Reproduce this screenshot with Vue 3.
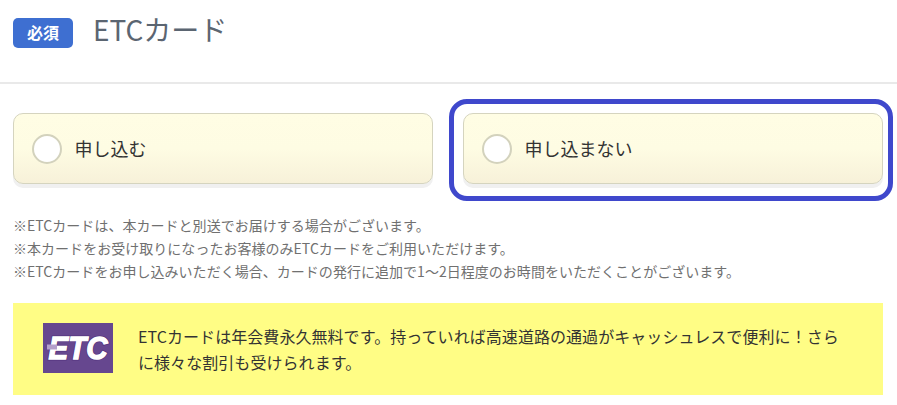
<template>
  <section class="etc">
    <header class="head">
      <span class="badge">必須</span>
      <h2>ETCカード</h2>
    </header>

    <div class="content">
      <div class="options">
        <label
          v-for="option in options"
          :key="option.value"
          class="option"
          :class="{ marked: option.marked }"
        >
          <input type="radio" name="etc" :value="option.value" v-model="selected" />
          <span>{{ option.label }}</span>
        </label>
      </div>

      <ul class="notes">
        <li v-for="note in notes" :key="note">{{ note }}</li>
      </ul>

      <div class="info">
        <svg class="logo" width="70" height="50" viewBox="0 0 70 50">
          <rect width="70" height="50" fill="#66478f" />
          <text class="logoShadow" x="5.500" y="35.800" textLength="59" lengthAdjust="spacingAndGlyphs">ETC</text>
          <text class="logoText" x="5.500" y="35.500" textLength="59" lengthAdjust="spacingAndGlyphs">ETC</text>
          <path d="M4 21.500h10v5H4z" fill="#b49fcb" />
        </svg>
        <p>
          ETCカードは年会費永久無料です。持っていれば高速道路の通過がキャッシュレスで便利に！さらに様々な割引も受けられます。
        </p>
      </div>
    </div>
  </section>
</template>

<script setup>
import { ref } from "vue";

const selected = ref("");

const options = [
  { value: "yes", label: "申し込む" },
  { value: "no", label: "申し込まない", marked: true },
];

const notes = [
  "※ETCカードは、本カードと別送でお届けする場合がございます。",
  "※本カードをお受け取りになったお客様のみETCカードをご利用いただけます。",
  "※ETCカードをお申し込みいただく場合、カードの発行に追加で1～2日程度のお時間をいただくことがございます。",
];
</script>

<style>
body {
  background: #fff;
}
</style>

<style scoped>
.etc {
  height: 405px;
  overflow: hidden;
  font-family: "Noto Sans CJK JP", sans-serif;
  color: #333;
}
.head {
  display: flex;
  align-items: flex-start;
  gap: 20px;
  box-sizing: border-box;
  height: 84px;
  padding: 9px 13px 0;
  border-bottom: 2px solid #e9e9e9;
}
.badge {
  width: 60px;
  height: 30px;
  margin-top: 9px;
  border-radius: 5px;
  background: #3e6fd1;
  color: #fff;
  font-size: 16px;
  font-weight: 700;
  line-height: 28px;
  text-align: center;
}
.head h2 {
  margin: 0;
  color: #5b6571;
  font-size: 28px;
  font-weight: 400;
  line-height: 40px;
}
.content {
  padding: 29px 14px 0 13px;
}
.options {
  display: flex;
  gap: 30px;
}
.option {
  position: relative;
  display: flex;
  flex: 1;
  align-items: center;
  gap: 12.500px;
  box-sizing: border-box;
  height: 71px;
  padding: 0 18px;
  border: 1px solid #d5d4bf;
  border-radius: 10px;
  background: linear-gradient(#fffde4 0%, #fefce3 50%, #f7f1d9 100%);
  box-shadow: 0 4px 0 #f0f0f0;
  font-size: 18px;
  line-height: 26px;
}
.option span {
  padding-bottom: 2px;
}
.option input {
  appearance: none;
  box-sizing: border-box;
  width: 30px;
  height: 30px;
  margin: 0;
  border: 2px solid #d3d2bd;
  border-radius: 50%;
  background: #fff;
}
.option input:checked {
  border: 9px solid #3e6fd1;
}
.marked::after {
  content: "";
  position: absolute;
  top: -15px;
  right: -11px;
  bottom: -18px;
  left: -15px;
  border: 5px solid #3f48cc;
  border-radius: 18px;
  pointer-events: none;
}
.notes {
  margin: 30px 0 0;
  padding: 0;
  list-style: none;
  color: #707070;
  font-size: 14px;
  line-height: 23px;
  letter-spacing: 0.03px;
}
.info {
  display: flex;
  align-items: flex-start;
  gap: 25px;
  box-sizing: border-box;
  height: 92px;
  margin-top: 20px;
  padding: 20px 30px;
  background: #fffd85;
}
.logo {
  flex: none;
}
.logo text {
  font-family: "Liberation Sans", sans-serif;
  font-size: 31px;
  font-style: italic;
  font-weight: 700;
}
.logoText {
  fill: #fff;
  stroke: #fff;
  stroke-width: 1.3;
}
.logoShadow {
  fill: #553580;
  stroke: #553580;
  stroke-width: 3;
}
.info p {
  width: 706px;
  margin: 0;
  font-size: 16px;
  line-height: 26px;
  letter-spacing: 0.06px;
}
</style>
